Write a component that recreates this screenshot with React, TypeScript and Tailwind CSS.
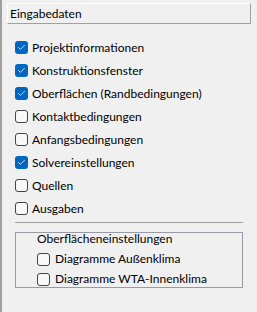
import { Check } from 'lucide-react';

const ITEMS = [
  { label: 'Projektinformationen', checked: true },
  { label: 'Konstruktionsfenster', checked: true },
  { label: 'Oberflächen (Randbedingungen)', checked: true },
  { label: 'Kontaktbedingungen', checked: false },
  { label: 'Anfangsbedingungen', checked: false },
  { label: 'Solvereinstellungen', checked: true },
  { label: 'Quellen', checked: false },
  { label: 'Ausgaben', checked: false },
];

function Box({ checked }: { checked: boolean }) {
  return checked ? (
    <div className="w-[13px] h-[13px] rounded-[3px] bg-[#0067c0] flex items-center justify-center flex-shrink-0">
      <Check className="w-[9px] h-[9px] text-white" strokeWidth={2} />
    </div>
  ) : (
    <div className="w-[13px] h-[13px] rounded-[3px] border border-[#444] bg-[#f8f8f8] flex-shrink-0" />
  );
}

export default function App() {
  return (
    <div
      className="w-[257px] h-[312px] bg-[#f0f0f0] border-l-2 border-[#a0a0a0] flex flex-col text-[12px] text-black"
      style={{ fontFamily: 'Lato, "Liberation Sans", sans-serif' }}
    >
      <div className="mt-[3px] ml-[5px] w-[244px] h-[21px] border border-t-white border-l-white border-r-[#a0a0a0] border-b-[#a0a0a0] pl-[2px] flex items-center">
        Eingabedaten
      </div>

      <div className="mt-[12px] pl-[13px] flex flex-col">
        {ITEMS.map(item => (
          <div key={item.label} className="h-[23px] flex items-center gap-[4px]">
            <Box checked={item.checked} />
            <span className="leading-none">{item.label}</span>
          </div>
        ))}
      </div>

      <div className="mt-[2px] ml-[13px] w-[228px] h-px bg-[#a0a0a0]" />

      <div className="mt-[9px] ml-[13px] w-[228px] h-[56px] border border-[#9a9aa6] pl-[21px] flex flex-col">
        <div className="h-[12px] flex items-center leading-none">Oberflächeneinstellungen</div>
        <div className="mt-[4px] flex flex-col">
          {['Diagramme Außenklima', 'Diagramme WTA-Innenklima'].map(label => (
            <div key={label} className="h-[20px] flex items-center gap-[5px]">
              <Box checked={false} />
              <span className="leading-none">{label}</span>
            </div>
          ))}
        </div>
      </div>
    </div>
  );
}
